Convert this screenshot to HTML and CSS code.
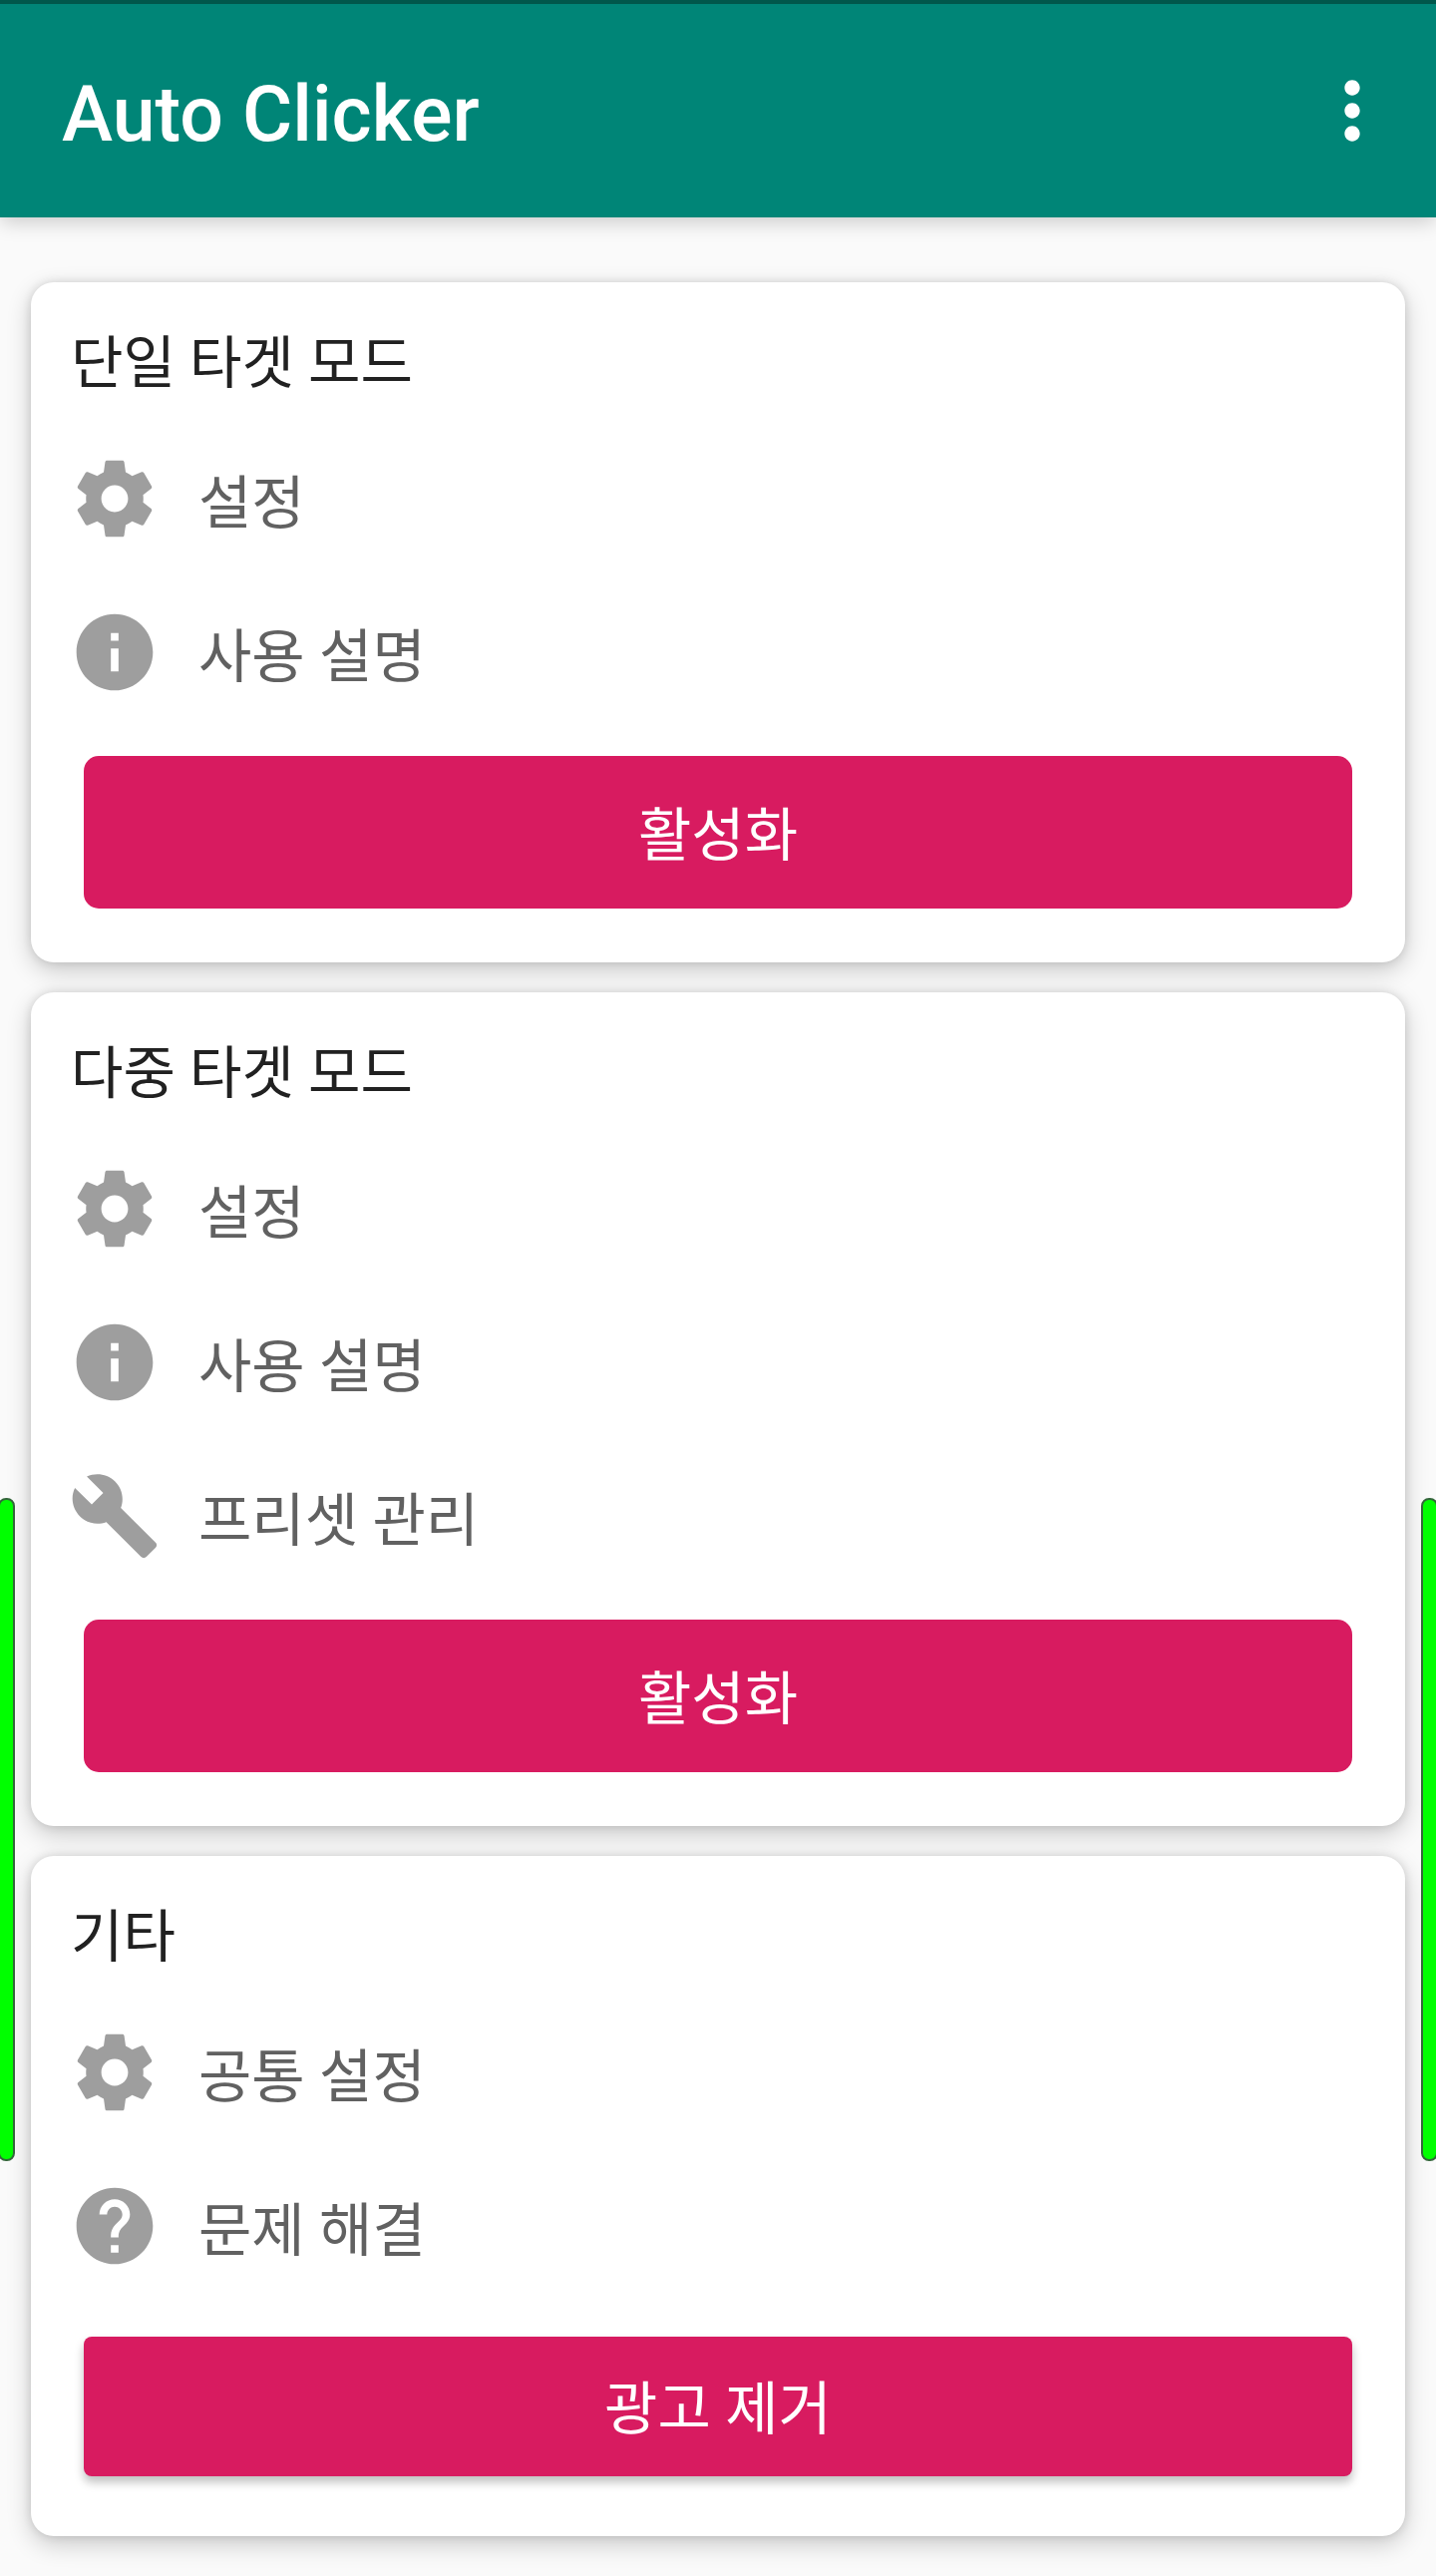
FILE: index.html
```
<!DOCTYPE html>
<html lang="ko">
	<head>
		<meta charset="UTF-8" />
		<meta name="viewport" content="width=device-width, initial-scale=1.0" />
		<title>Auto Clicker</title>
		<link rel="stylesheet" href="styles.css">
	</head>
	<body>
		<!-- 공용 아이콘 -->
		<svg class="sprite" aria-hidden="true">
			<symbol id="icon-settings" viewBox="0 0 24 24">
				<path d="M19.43 12.98c.04-.32.07-.64.07-.98s-.03-.66-.07-.98l2.11-1.65c.19-.15.24-.42.12-.64l-2-3.46c-.12-.22-.39-.3-.61-.22l-2.49 1c-.52-.4-1.08-.73-1.69-.98l-.38-2.65C14.46 2.18 14.25 2 14 2h-4c-.25 0-.46.18-.49.42l-.38 2.65c-.61.25-1.17.59-1.69.98l-2.49-1c-.23-.09-.49 0-.61.22l-2 3.46c-.13.22-.07.49.12.64l2.11 1.65c-.04.32-.07.65-.07.98s.03.66.07.98l-2.11 1.65c-.19.15-.24.42-.12.64l2 3.46c.12.22.39.3.61.22l2.49-1c.52.4 1.08.73 1.69.98l.38 2.65c.03.24.24.42.49.42h4c.25 0 .46-.18.49-.42l.38-2.65c.61-.25 1.17-.59 1.69-.98l2.49 1c.23.09.49 0 .61-.22l2-3.46c.12-.22.07-.49-.12-.64l-2.11-1.65zM12 15.5c-1.93 0-3.5-1.57-3.5-3.5s1.57-3.5 3.5-3.5 3.5 1.57 3.5 3.5-1.57 3.5-3.5 3.5z" />
			</symbol>
			<symbol id="icon-info" viewBox="0 0 24 24">
				<path d="M12 2C6.48 2 2 6.48 2 12s4.48 10 10 10 10-4.48 10-10S17.52 2 12 2zm1 15h-2v-6h2v6zm0-8h-2V7h2v2z" />
			</symbol>
			<symbol id="icon-build" viewBox="0 0 24 24">
				<path d="M22.7 19l-9.1-9.1c.9-2.3.4-5-1.5-6.9-2-2-5-2.4-7.4-1.3L9 6 6 9 1.6 4.7C.4 7.1.9 10.1 2.9 12.1c1.9 1.9 4.6 2.4 6.9 1.5l9.1 9.1c.4.4 1 .4 1.4 0l2.3-2.3c.5-.4.5-1.1.1-1.4z" />
			</symbol>
			<symbol id="icon-help" viewBox="0 0 24 24">
				<path d="M12 2C6.48 2 2 6.48 2 12s4.48 10 10 10 10-4.48 10-10S17.52 2 12 2zm1 17h-2v-2h2v2zm2.07-7.75l-.9.92C13.45 12.9 13 13.5 13 15h-2v-.5c0-1.1.45-2.1 1.17-2.83l1.24-1.26c.37-.36.59-.86.59-1.41 0-1.1-.9-2-2-2s-2 .9-2 2H8c0-2.21 1.79-4 4-4s4 1.79 4 4c0 .88-.36 1.68-.93 2.25z" />
			</symbol>
			<symbol id="icon-more" viewBox="0 0 24 24">
				<path d="M12 8c1.1 0 2-.9 2-2s-.9-2-2-2-2 .9-2 2 .9 2 2 2zm0 2c-1.1 0-2 .9-2 2s.9 2 2 2 2-.9 2-2-.9-2-2-2zm0 6c-1.1 0-2 .9-2 2s.9 2 2 2 2-.9 2-2-.9-2-2-2z" />
			</symbol>
		</svg>

		<header class="app-bar">
			<h1>Auto Clicker</h1>
			<button class="btn-more" aria-label="더보기">
				<svg class="icon"><use href="#icon-more" /></svg>
			</button>
		</header>

		<main class="container">
			<section class="card">
				<h2>단일 타겟 모드</h2>
				<button class="item"><svg class="icon"><use href="#icon-settings" /></svg>설정</button>
				<button class="item"><svg class="icon"><use href="#icon-info" /></svg>사용 설명</button>
				<button class="btn">활성화</button>
			</section>

			<section class="card">
				<h2>다중 타겟 모드</h2>
				<button class="item"><svg class="icon"><use href="#icon-settings" /></svg>설정</button>
				<button class="item"><svg class="icon"><use href="#icon-info" /></svg>사용 설명</button>
				<button class="item"><svg class="icon"><use href="#icon-build" /></svg>프리셋 관리</button>
				<button class="btn">활성화</button>
			</section>

			<section class="card">
				<h2>기타</h2>
				<button class="item"><svg class="icon"><use href="#icon-settings" /></svg>공통 설정</button>
				<button class="item"><svg class="icon"><use href="#icon-help" /></svg>문제 해결</button>
				<button class="btn btn-raised">광고 제거</button>
			</section>
		</main>

		<!-- 화면 가장자리 핸들 -->
		<div class="edge edge-left"></div>
		<div class="edge edge-right"></div>
	</body>
</html>
```
FILE: styles.css
```
* {
	box-sizing: border-box;
	margin: 0;
	padding: 0;
}
body {
	font-family: Roboto, "Noto Sans CJK KR", sans-serif;
	font-size: 58px;
	background-color: #fafafa;
	overflow-x: hidden;
}
button {
	border: none;
	background: none;
	color: inherit;
	font: inherit;
	cursor: pointer;
}
.sprite {
	display: none;
}
.icon {
	display: block;
	flex: none;
	width: 92px;
	height: 92px;
	fill: currentColor;
}
.app-bar {
	display: flex;
	align-items: center;
	justify-content: space-between;
	height: 218px;
	padding: 0 38px 0 62px;
	border-top: 4px solid #00574b;
	background-color: #008577;
	color: #fff;
	box-shadow: 0 4px 20px rgba(0, 0, 0, 0.2);
}
.app-bar h1 {
	padding-top: 8px;
	font-size: 77px;
	font-weight: 500;
	line-height: 90px;
}
.container {
	display: flex;
	flex-direction: column;
	gap: 30px;
	padding: 65px 31px 40px;
}
.card {
	display: flex;
	flex-direction: column;
	padding: 44px 38px 54px;
	border-radius: 23px;
	background-color: #fff;
	box-shadow: 0 8px 24px rgba(0, 0, 0, 0.2), 0 0 10px rgba(0, 0, 0, 0.12);
}
.card h2 {
	margin-bottom: 20px;
	padding: 0 2px;
	color: #212121;
	font-size: 57px;
	font-weight: 400;
	line-height: 76px;
}
.item {
	display: flex;
	align-items: center;
	gap: 38px;
	height: 154px;
	color: #616161;
	text-align: left;
}
.item .icon {
	color: #9e9e9e;
}
.btn {
	height: 153px;
	margin: 27px 15px 0;
	padding-bottom: 4px;
	border-radius: 15px;
	background-color: #d81b60;
	color: #fff;
}
.btn:hover {
	background-color: #c2185b;
}
.btn-raised {
	height: 140px;
	margin-top: 34px;
	margin-bottom: 6px;
	border-radius: 8px;
	box-shadow: 0 6px 10px rgba(0, 0, 0, 0.25);
}
.edge {
	position: fixed;
	top: 1502px;
	width: 17px;
	height: 665px;
	border: 2px solid #33663a;
	border-radius: 8px;
	background-color: #0f0;
}
.edge-left {
	left: -2px;
}
.edge-right {
	right: -2px;
}
```
